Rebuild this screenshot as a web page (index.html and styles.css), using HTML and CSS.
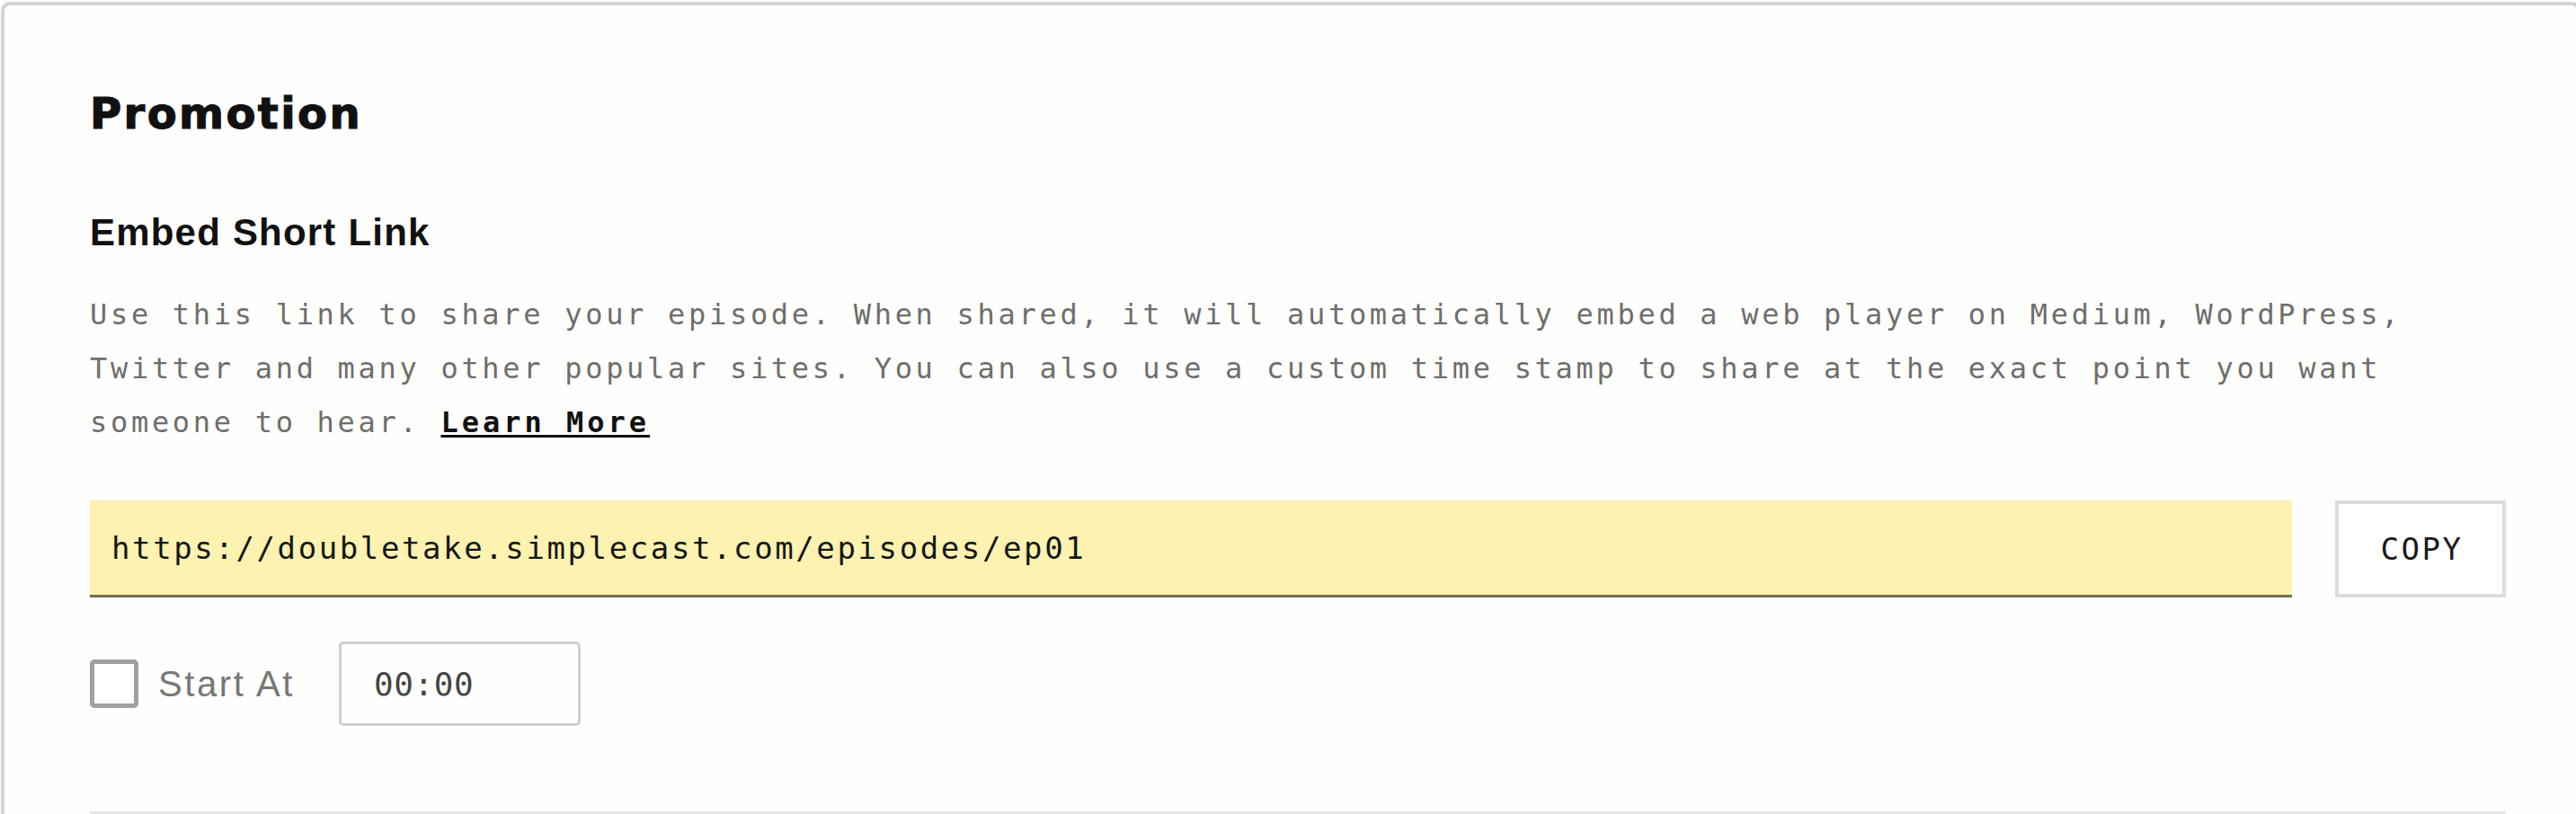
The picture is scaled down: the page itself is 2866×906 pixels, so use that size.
FILE: index.html
```html
<!DOCTYPE html>
<html lang="en">
<head>
<meta charset="utf-8">
<title>Promotion</title>
<link rel="stylesheet" href="styles.css">
</head>
<body>
<section class="card">
  <h1 class="title">Promotion</h1>
  <h2 class="subtitle">Embed Short Link</h2>
  <p class="desc">Use this link to share your episode. When shared, it will automatically embed a web player on Medium, WordPress, Twitter and many other popular sites. You can also use a custom time stamp to share at the exact point you want someone to hear. <a class="learn" href="#">Learn More</a></p>
  <div class="link-row">
    <div class="link-field">https://doubletake.simplecast.com/episodes/ep01</div>
    <button class="copy-btn" type="button">COPY</button>
  </div>
  <div class="start-row">
    <label class="start-label"><span class="checkbox"></span><span class="start-text">Start At</span></label>
    <div class="time-field">00:00</div>
  </div>
  <div class="divider"></div>
</section>
</body>
</html>
```
FILE: styles.css
```css
html, body {
  margin: 0;
  padding: 0;
  background: #ffffff;
}
body {
  overflow: hidden;
}
.card {
  margin: 2px -5px 0 1px;
  border: 4px solid #d3d3d2;
  border-radius: 10px;
  background: #fefefd;
  padding: 96px 79px 0 95px;
  height: 1000px;
  box-sizing: border-box;
}
.title {
  margin: 0;
  font-family: "DejaVu Sans", sans-serif;
  font-weight: 700;
  font-size: 48px;
  line-height: 48px;
  letter-spacing: 2.4px;
  -webkit-text-stroke: 1.2px #111111;
  color: #111111;
}
.subtitle {
  margin: 88px 0 0;
  font-family: "Liberation Sans", Arial, sans-serif;
  font-weight: 700;
  font-size: 42px;
  line-height: 42px;
  letter-spacing: 1.2px;
  color: #111111;
}
.desc {
  margin: 40px 0 0;
  font-family: "DejaVu Sans Mono", monospace;
  font-size: 32px;
  line-height: 60px;
  letter-spacing: 3.7px;
  color: #6e6e6c;
}
.learn {
  color: #111111;
  font-weight: 700;
  letter-spacing: 4px;
  text-decoration: underline;
  text-decoration-thickness: 3px;
  text-underline-offset: 3px;
}
.link-row {
  margin-top: 57px;
  display: flex;
  align-items: stretch;
  gap: 48px;
}
.link-field {
  flex: 1;
  height: 108px;
  box-sizing: border-box;
  background: #fdf2b0;
  border-bottom: 3px solid #716d4d;
  display: flex;
  align-items: center;
  padding-left: 24px;
  font-family: "DejaVu Sans Mono", monospace;
  font-size: 34px;
  letter-spacing: 2.6px;
  color: #161616;
}
.copy-btn {
  width: 190px;
  height: 108px;
  box-sizing: border-box;
  border: 4px solid #dcdcdc;
  background: #ffffff;
  border-radius: 0;
  font-family: "DejaVu Sans Mono", monospace;
  font-size: 34px;
  letter-spacing: 2.5px;
  color: #1a1a1a;
  padding: 0 0 0 3px;
  cursor: pointer;
}
.start-row {
  margin-top: 49px;
  display: flex;
  align-items: center;
  gap: 49px;
}
.start-label {
  display: flex;
  align-items: center;
  gap: 22px;
}
.checkbox {
  width: 54px;
  height: 54px;
  box-sizing: border-box;
  border: 5px solid #a0a09e;
  border-radius: 5px;
  background: #ffffff;
}
.start-text {
  font-family: "Liberation Sans", Arial, sans-serif;
  font-size: 40px;
  letter-spacing: 2.6px;
  color: #777775;
}
.time-field {
  width: 269px;
  height: 94px;
  box-sizing: border-box;
  border: 3px solid #d0d0d0;
  border-radius: 5px;
  display: flex;
  align-items: center;
  padding-left: 36px;
  font-family: "DejaVu Sans Mono", monospace;
  font-size: 36px;
  letter-spacing: 0.6px;
  color: #444444;
}
.divider {
  margin-top: 95px;
  height: 10px;
  background: #e6e6e6;
}
```
